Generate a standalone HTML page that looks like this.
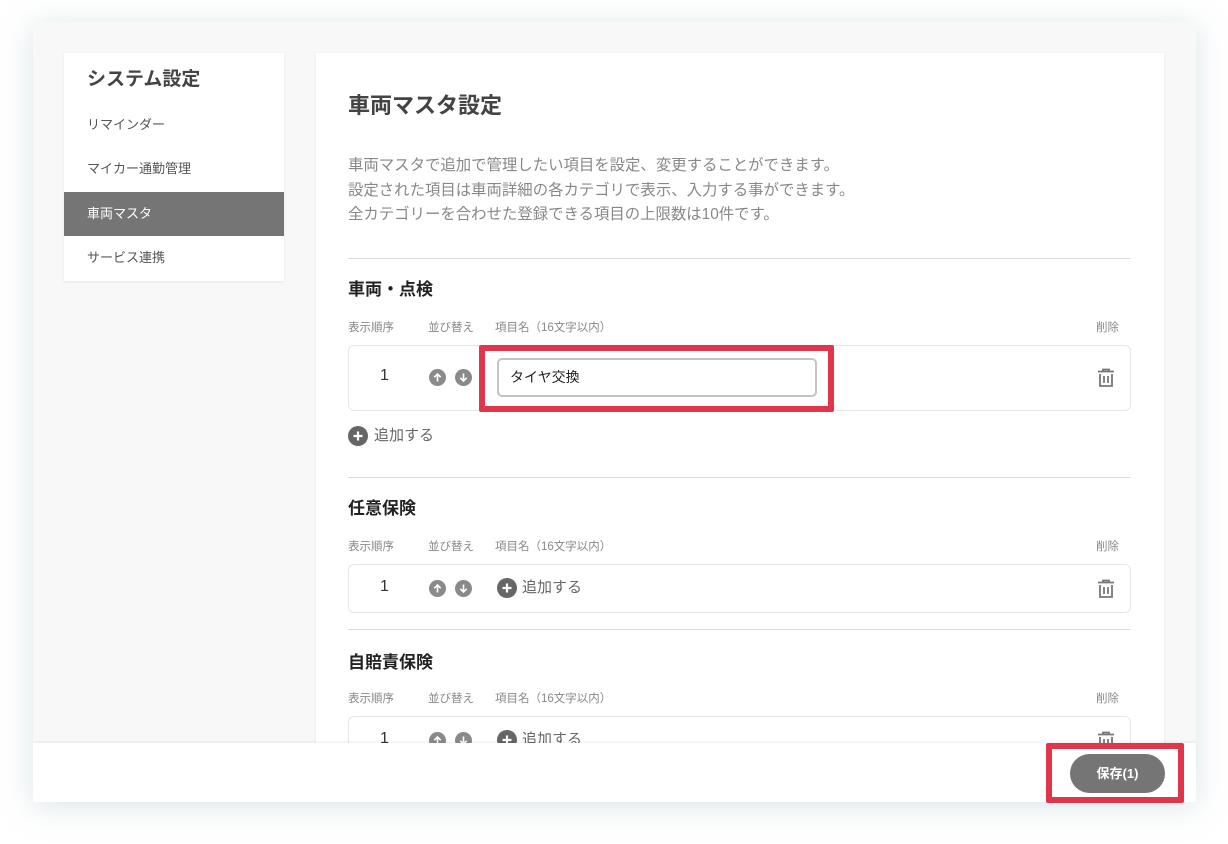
<!DOCTYPE html>
<html><head><meta charset="utf-8"><style>
*{box-sizing:border-box;margin:0;padding:0}
body{width:1228px;height:844px;background:#fff;font-family:"Liberation Sans","Noto Sans CJK JP",sans-serif;position:relative;overflow:hidden;color:#333}
.frame{position:absolute;left:33px;top:22px;width:1163px;height:780px;background:#f8f8f8;box-shadow:0 4px 30px rgba(150,180,190,.35);overflow:hidden}
.side{position:absolute;left:31px;top:31px;width:220px;height:228px;background:#fff;box-shadow:0 1px 3px rgba(0,0,0,.08)}
.side h2{position:absolute;left:23px;top:11px;font-size:19px;font-weight:bold;color:#444}
.side .it{position:absolute;left:0;width:220px;height:44px;line-height:44px;padding-left:23px;font-size:13px;color:#555}
.side .on{background:#757575;color:#fff}
.main{position:absolute;left:283px;top:31px;width:848px;height:800px;background:#fff;box-shadow:0 1px 3px rgba(0,0,0,.08)}
.a{position:absolute;white-space:nowrap}
.t{left:32px;top:35px;font-size:22px;font-weight:bold;color:#444}
.d{left:32px;font-size:15.4px;color:#888}
.hr{position:absolute;left:32px;width:783px;height:1px;background:#ddd}
.h{left:32px;font-size:17px;font-weight:bold;color:#222}
.l{font-size:11.5px;color:#888}
.row{position:absolute;left:32px;width:783px;border:1px solid #e6e6e6;border-radius:6px}
.num{font-size:16px;color:#333}
.c{position:absolute;width:17px;height:17px}
.plus{position:absolute;width:20px;height:20px}
.add{font-size:15px;color:#666}
.tr{position:absolute;width:18px;height:20px}
.footer{position:absolute;left:0;top:721px;width:1163px;height:59px;background:#fff;box-shadow:0 -1px 3px rgba(0,0,0,.08)}
.red{position:absolute;border:6px solid #e0364b;border-radius:2px}
.btn{position:absolute;left:1037px;top:11px;width:95px;height:39px;border-radius:20px;background:#757575;color:#fff;font-weight:bold;font-size:13px;text-align:center;line-height:39px}
</style></head><body>
<svg width="0" height="0" style="position:absolute"><defs>
<symbol id="up" viewBox="0 0 17 17"><circle cx="8.5" cy="8.5" r="8.5" fill="#8a8a8a"/><path d="M8.5 12.5V5M5.3 8.2l3.2-3.2 3.2 3.2" stroke="#fff" stroke-width="1.6" fill="none"/></symbol>
<symbol id="dn" viewBox="0 0 17 17"><circle cx="8.5" cy="8.5" r="8.5" fill="#8a8a8a"/><path d="M8.5 4.5V12M5.3 8.8l3.2 3.2 3.2-3.2" stroke="#fff" stroke-width="1.6" fill="none"/></symbol>
<symbol id="pl" viewBox="0 0 20 20"><circle cx="10" cy="10" r="10" fill="#666"/><path d="M10 5.5v9M5.5 10h9" stroke="#fff" stroke-width="2.2"/></symbol>
<symbol id="tr" viewBox="0 0 18 20"><path d="M6 3V1.5h6V3M1 3.5h16M3 6v12h12V6M3 18h12M7 8v7M11 8v7" stroke="#777" stroke-width="1.8" fill="none"/></symbol>
</defs></svg>
<div class="frame">
<div class="side">
<h2>システム設定</h2>
<div class="it" style="top:50px">リマインダー</div>
<div class="it" style="top:94px">マイカー通勤管理</div>
<div class="it on" style="top:139px">車両マスタ</div>
<div class="it" style="top:183px">サービス連携</div>
</div>
<div class="main">
<div class="a t">車両マスタ設定</div>
<div class="a d" style="top:100px">車両マスタで追加で管理したい項目を設定、変更することができます。</div>
<div class="a d" style="top:125px">設定された項目は車両詳細の各カテゴリで表示、入力する事ができます。</div>
<div class="a d" style="top:149px">全カテゴリーを合わせた登録できる項目の上限数は10件です。</div>
<div class="hr" style="top:205px"></div>

<div class="a h" style="top:222px">車両・点検</div>
<div class="a l" style="left:32px;top:266px">表示順序</div><div class="a l" style="left:112px;top:266px">並び替え</div><div class="a l" style="left:179px;top:266px">項目名（16文字以内）</div><div class="a l" style="left:780px;top:266px">削除</div>
<div class="row" style="top:292px;height:66px"></div>
<div class="a num" style="left:64px;top:314px">1</div>
<svg class="c" style="left:113px;top:316px"><use href="#up"/></svg><svg class="c" style="left:139px;top:316px"><use href="#dn"/></svg>
<div class="a" style="left:181px;top:305px;width:320px;height:39px;border:2px solid #c4c4c4;border-radius:5px;font-size:14px;line-height:35px;padding-left:11px;color:#222">タイヤ交換</div>
<svg class="tr" style="left:781px;top:315px"><use href="#tr"/></svg>
<svg class="plus" style="left:32px;top:373px"><use href="#pl"/></svg><div class="a add" style="left:58px;top:371px">追加する</div>
<div class="hr" style="top:424px"></div>

<div class="a h" style="top:441px">任意保険</div>
<div class="a l" style="left:32px;top:485px">表示順序</div><div class="a l" style="left:112px;top:485px">並び替え</div><div class="a l" style="left:179px;top:485px">項目名（16文字以内）</div><div class="a l" style="left:780px;top:485px">削除</div>
<div class="row" style="top:511px;height:49px"></div>
<div class="a num" style="left:64px;top:525px">1</div>
<svg class="c" style="left:113px;top:527px"><use href="#up"/></svg><svg class="c" style="left:139px;top:527px"><use href="#dn"/></svg>
<svg class="plus" style="left:181px;top:525px"><use href="#pl"/></svg><div class="a add" style="left:206px;top:523px">追加する</div>
<svg class="tr" style="left:781px;top:526px"><use href="#tr"/></svg>
<div class="hr" style="top:576px"></div>

<div class="a h" style="top:595px">自賠責保険</div>
<div class="a l" style="left:32px;top:637px">表示順序</div><div class="a l" style="left:112px;top:637px">並び替え</div><div class="a l" style="left:179px;top:637px">項目名（16文字以内）</div><div class="a l" style="left:780px;top:637px">削除</div>
<div class="row" style="top:663px;height:49px"></div>
<div class="a num" style="left:64px;top:677px">1</div>
<svg class="c" style="left:113px;top:679px"><use href="#up"/></svg><svg class="c" style="left:139px;top:679px"><use href="#dn"/></svg>
<svg class="plus" style="left:181px;top:677px"><use href="#pl"/></svg><div class="a add" style="left:206px;top:675px">追加する</div>
<svg class="tr" style="left:781px;top:678px"><use href="#tr"/></svg>
</div>
<div class="footer"><div class="btn">保存(1)</div></div>
</div>
<div class="red" style="left:479px;top:345px;width:355px;height:67px"></div>
<div class="red" style="left:1046px;top:743px;width:138px;height:60px"></div>
</body></html>
